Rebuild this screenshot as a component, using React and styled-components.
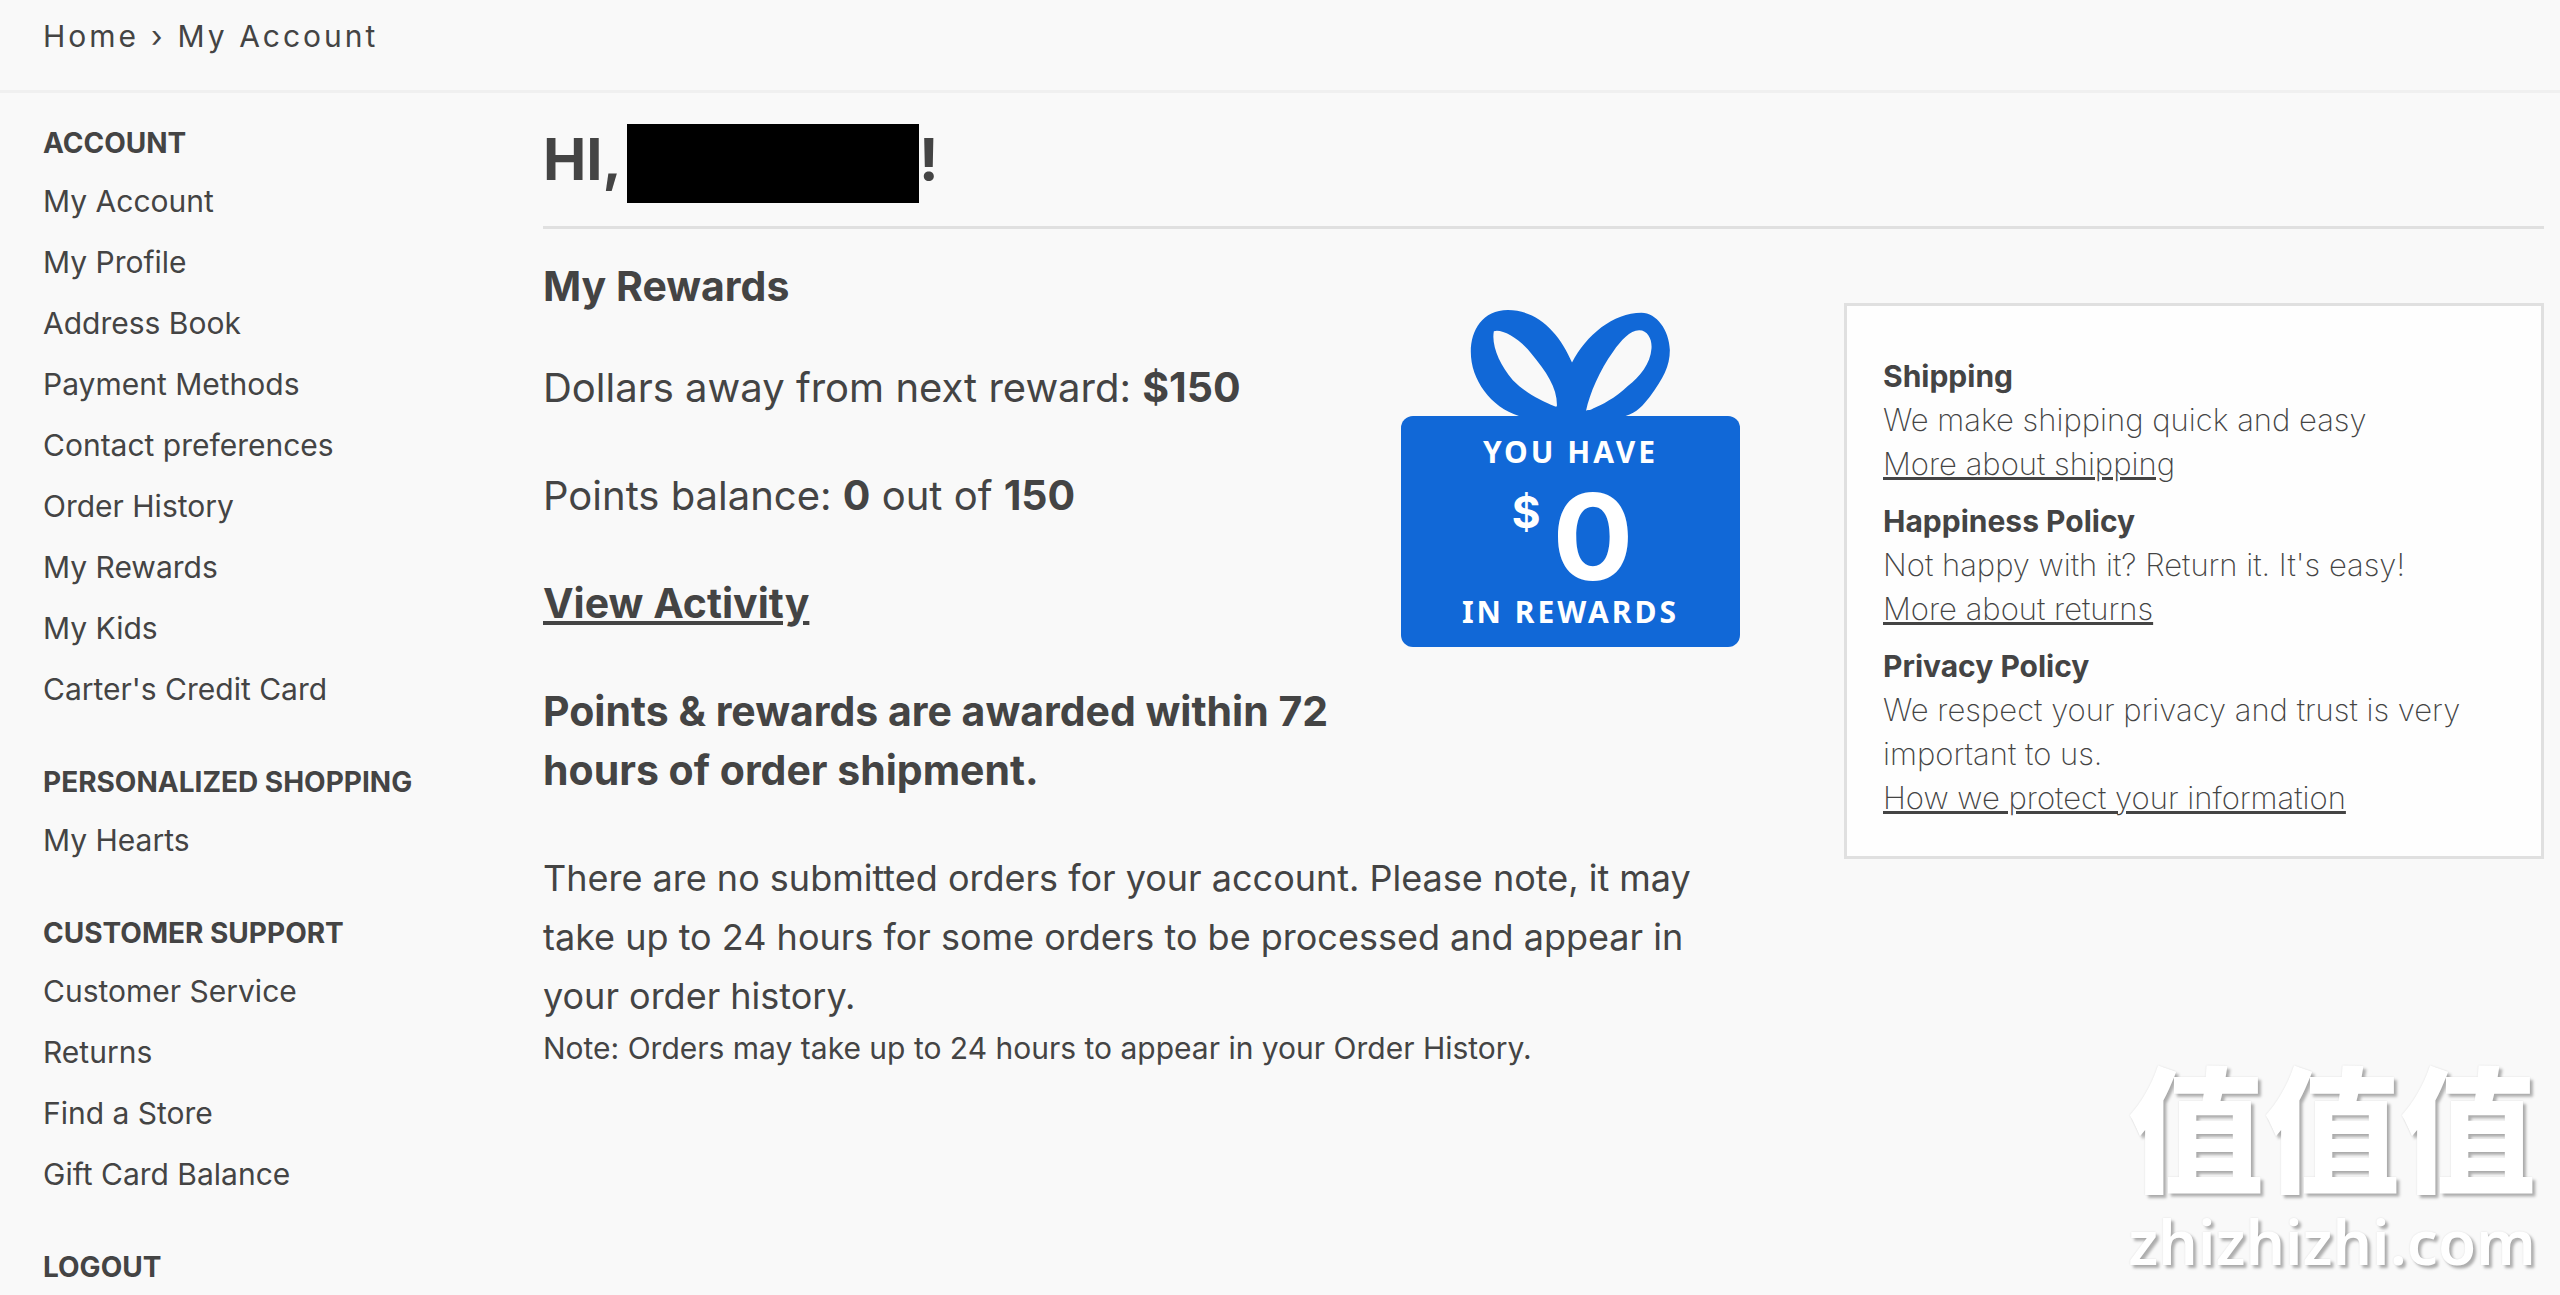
import React from 'react';
import styled, { createGlobalStyle } from 'styled-components';

const GlobalStyle = createGlobalStyle`
  * {
    box-sizing: border-box;
  }
  body {
    margin: 0;
    background: #f9f9f9;
    color: #444;
    font-family: Inter, 'Liberation Sans', sans-serif;
    font-size: 30px;
  }
  h1, h2, h3, p, ul, ol {
    margin: 0;
    padding: 0;
  }
  ul, ol {
    list-style: none;
  }
  a {
    color: inherit;
    text-decoration: none;
  }
`;

const Breadcrumb = styled.nav`
  padding: 0 43px 17px;
  border-bottom: 3px solid #f0f0f0;
  line-height: 73px;
  letter-spacing: 3px;
  ol {
    display: flex;
    gap: 12px;
  }
`;

const Layout = styled.div`
  display: grid;
  grid-template-columns: 500px 1fr;
  padding: 0 16px 0 43px;
`;

const Sidebar = styled.nav`
  display: flex;
  flex-direction: column;
  gap: 34px;
  padding-top: 22px;
`;

const SideTitle = styled.h2`
  font-size: 28px;
  font-weight: 700;
  line-height: 56px;
`;

const SideLink = styled.a`
  display: block;
  line-height: 61px;
`;

const Main = styled.main`
  padding-top: 31px;
`;

const Greeting = styled.h1`
  display: flex;
  padding-bottom: 23px;
  border-bottom: 3px solid #e0e0e0;
  font-size: 58px;
  font-weight: 700;
  line-height: 70px;
`;

const HiddenName = styled.span`
  width: 292px;
  height: 79px;
  margin-left: 5px;
  background: #000;
`;

const Columns = styled.div`
  display: grid;
  grid-template-columns: 1fr 700px;
  align-items: start;
  gap: 104px;
`;

const Rewards = styled.section`
  display: flex;
  align-items: flex-start;
  justify-content: space-between;
  gap: 20px;
`;

const RewardsText = styled.div`
  padding-top: 28px;
  font-size: 40px;
  line-height: 59px;
  h2, a, b {
    font-size: 41px;
    font-weight: 700;
  }
  h2 {
    margin-bottom: 42px;
  }
  p {
    margin-bottom: 49px;
  }
  a {
    text-decoration: underline;
  }
`;

const Orders = styled.p`
  font-size: 36px;
  line-height: 59px;
`;

const Note = styled.p`
  line-height: 44px;
`;

const Gift = styled.div`
  flex: none;
  width: 339px;
  margin-top: 81px;
  svg {
    display: block;
    width: 100%;
  }
`;

const GiftBox = styled.div`
  height: 231px;
  padding-top: 16px;
  border-radius: 12px;
  background: #1168d7;
  color: #fff;
  font-weight: 700;
  text-align: center;
`;

const GiftLabel = styled.p`
  font-family: 'Noto Sans', sans-serif;
  font-size: 30px;
  line-height: 40px;
  letter-spacing: 3px;
`;

const GiftAmount = styled.p`
  display: flex;
  justify-content: center;
  gap: 12px;
  padding: 12px 0 2px 4px;
  font-size: 120px;
  line-height: 106px;
  span {
    font-size: 44px;
    line-height: 56px;
  }
`;

const InfoCard = styled.aside`
  display: flex;
  flex-direction: column;
  gap: 13px;
  margin-top: 74px;
  padding: 48px 36px 36px;
  border: 3px solid #e0e0e0;
  background: #fefefe;
  font-size: 31px;
  font-weight: 200;
  line-height: 44px;
  h3 {
    font-size: 30px;
    font-weight: 700;
  }
  a {
    text-decoration: underline;
    text-decoration-thickness: 3px;
  }
`;

const Watermark = styled.div`
  position: fixed;
  right: 24px;
  bottom: 18px;
  color: #fff;
  text-align: center;
  text-shadow: 3px 3px 3px rgba(0, 0, 0, 0.3), 0 0 2px rgba(0, 0, 0, 0.12);
`;

const WatermarkMark = styled.div`
  margin-bottom: 12px;
  font-family: 'Noto Sans CJK SC', sans-serif;
  font-size: 136px;
  font-weight: 900;
  line-height: 140px;
`;

const WatermarkSite = styled.div`
  font-family: 'Noto Sans', sans-serif;
  font-size: 62px;
  font-weight: 600;
  line-height: 72px;
`;

const menu = [
  {
    title: 'ACCOUNT',
    links: [
      'My Account',
      'My Profile',
      'Address Book',
      'Payment Methods',
      'Contact preferences',
      'Order History',
      'My Rewards',
      'My Kids',
      "Carter's Credit Card",
    ],
  },
  { title: 'PERSONALIZED SHOPPING', links: ['My Hearts'] },
  {
    title: 'CUSTOMER SUPPORT',
    links: ['Customer Service', 'Returns', 'Find a Store', 'Gift Card Balance'],
  },
];

const policies = [
  { title: 'Shipping', text: 'We make shipping quick and easy', link: 'More about shipping' },
  { title: 'Happiness Policy', text: "Not happy with it? Return it. It's easy!", link: 'More about returns' },
  {
    title: 'Privacy Policy',
    text: 'We respect your privacy and trust is very important to us.',
    link: 'How we protect your information',
  },
];

const Bow = () => (
  <svg viewBox="65 60 1015 318" aria-hidden="true">
    <path
      fill="#1168d7"
      fillRule="evenodd"
      d="M577 217C540 130 475 60 385 60C310 60 274 120 274 185C274 270 335 352 420 378H735C770 370 790 345 810 320C850 265 870 230 870 180C868 120 830 68 785 68C700 68 620 135 577 217Z
         M343 124C365 115 420 145 455 190C500 245 532 290 532 345Q532 352 525 348C485 332 440 310 400 270C360 225 335 165 343 124Z
         M619 362C630 310 660 240 700 185C725 150 750 122 778 121C805 121 817 150 815 175C812 220 780 260 745 287C705 325 665 345 640 355C630 362 622 358 619 362Z"
    />
  </svg>
);

const App = () => {
  return (
    <>
      <GlobalStyle />
      <Breadcrumb aria-label="Breadcrumb">
        <ol>
          <li><a href="#home">Home</a></li>
          <li aria-hidden="true">›</li>
          <li><a href="#account">My Account</a></li>
        </ol>
      </Breadcrumb>
      <Layout>
        <Sidebar>
          {menu.map(({ title, links }) => (
            <section key={title}>
              <SideTitle>{title}</SideTitle>
              <ul>
                {links.map(link => (
                  <li key={link}><SideLink href="#">{link}</SideLink></li>
                ))}
              </ul>
            </section>
          ))}
          <SideTitle><a href="#logout">LOGOUT</a></SideTitle>
        </Sidebar>

        <Main>
          <Greeting>HI,<HiddenName />!</Greeting>
          <Columns>
            <div>
              <Rewards>
                <RewardsText>
                  <h2>My Rewards</h2>
                  <p>Dollars away from next reward: <b>$150</b></p>
                  <p>Points balance: <b>0</b> out of <b>150</b></p>
                  <p><a href="#activity">View Activity</a></p>
                  <p><b>Points &amp; rewards are awarded within 72 hours of order shipment.</b></p>
                </RewardsText>
                <Gift>
                  <Bow />
                  <GiftBox>
                    <GiftLabel>YOU HAVE</GiftLabel>
                    <GiftAmount><span>$</span>0</GiftAmount>
                    <GiftLabel>IN REWARDS</GiftLabel>
                  </GiftBox>
                </Gift>
              </Rewards>
              <Orders>
                There are no submitted orders for your account. Please note, it may take up to 24 hours
                for some orders to be processed and appear in your order history.
              </Orders>
              <Note>Note: Orders may take up to 24 hours to appear in your Order History.</Note>
            </div>
            <InfoCard>
              {policies.map(({ title, text, link }) => (
                <div key={title}>
                  <h3>{title}</h3>
                  <p>{text}</p>
                  <a href="#">{link}</a>
                </div>
              ))}
            </InfoCard>
          </Columns>
        </Main>
      </Layout>
      <Watermark>
        <WatermarkMark>值值值</WatermarkMark>
        <WatermarkSite>zhizhizhi.com</WatermarkSite>
      </Watermark>
    </>
  );
};

export default App;
